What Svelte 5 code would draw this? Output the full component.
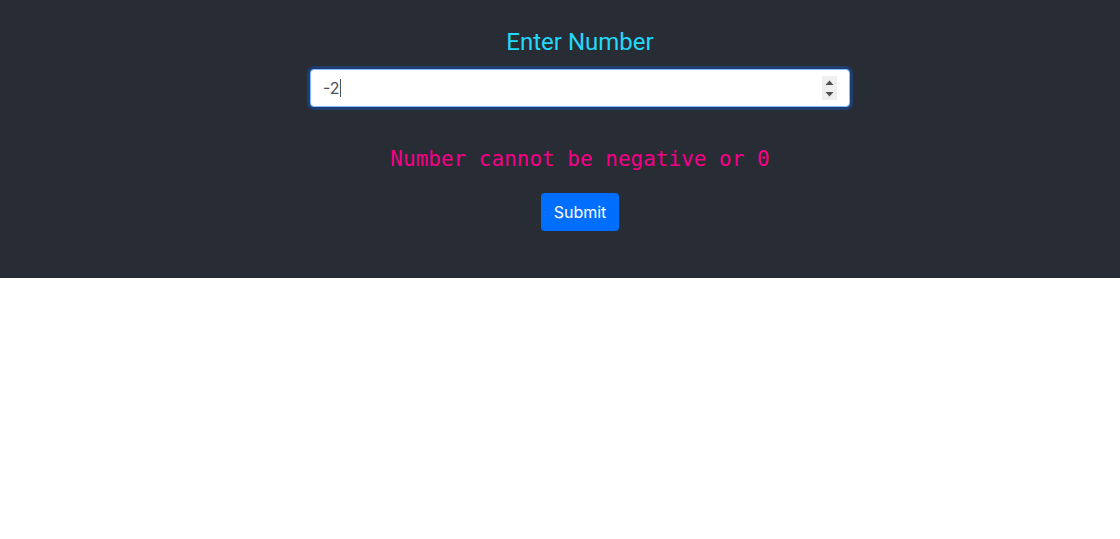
<script>
  let value = $state(-2);
  let error = $derived(value <= 0 ? 'Number cannot be negative or 0' : '');
  let field;

  $effect(() => {
    field.focus();
  });
</script>

<main>
  <form onsubmit={(e) => e.preventDefault()}>
    <label for="number">Enter Number</label>
    <div class="control">
      <input id="number" type="number" bind:value bind:this={field} />
      <span class="caret"></span>
      <div class="stepper">
        <button type="button" aria-label="Increase" tabindex="-1" onclick={() => (value += 1)}>
          <svg viewBox="0 0 15 12" width="15" height="12"><path d="M3.5 9 7.5 4.5 11.5 9Z" /></svg>
        </button>
        <button type="button" aria-label="Decrease" tabindex="-1" onclick={() => (value -= 1)}>
          <svg viewBox="0 0 15 12" width="15" height="12"><path d="M3.5 4 7.5 8.5 11.5 4Z" /></svg>
        </button>
      </div>
    </div>
    <p class="error" role="alert">{error}</p>
    <button class="submit" type="submit">Submit</button>
  </form>
</main>

<style>
  :global(body) {
    background: #fff;
  }

  main {
    display: flex;
    justify-content: center;
    padding: 24px 0 47px 40px;
    background: #282c34;
    font-family: Inter, "Liberation Sans", sans-serif;
  }

  form {
    display: flex;
    flex-direction: column;
    align-items: center;
    width: 100%;
    max-width: 540px;
  }

  label {
    margin-bottom: 9px;
    font-family: Roboto, "Liberation Sans", sans-serif;
    font-size: 24px;
    line-height: 36px;
    color: #21d9fa;
  }

  .control {
    position: relative;
    width: 100%;
  }

  input {
    box-sizing: border-box;
    display: block;
    width: 100%;
    height: 38px;
    padding: 6px 12px;
    border: 1px solid #80bdff;
    border-radius: 4px;
    outline: none;
    background: #fff;
    box-shadow: 0 0 0 3px rgba(20, 83, 180, 0.45);
    caret-color: transparent;
    appearance: textfield;
    font: 16px/24px Inter, "Liberation Sans", sans-serif;
    color: #495057;
  }

  input::-webkit-inner-spin-button {
    appearance: none;
    margin: 0;
  }

  .caret {
    position: absolute;
    top: 10px;
    left: 30px;
    width: 1px;
    height: 18px;
    background: #495057;
  }

  .stepper {
    position: absolute;
    top: 7px;
    right: 13px;
    display: flex;
    flex-direction: column;
    background: #efefef;
  }

  .stepper button {
    display: block;
    padding: 0;
    border: 0;
    background: none;
  }

  .stepper svg {
    display: block;
    fill: #505050;
  }

  .error {
    margin: 35px 0 17px;
    font-family: "DejaVu Sans Mono", monospace;
    font-size: 21px;
    line-height: 34px;
    color: #f50087;
  }

  .submit {
    height: 38px;
    padding: 6px 13px;
    border: 0;
    border-radius: 4px;
    background: #006fff;
    font: 16px/24px Inter, "Liberation Sans", sans-serif;
    color: #fff;
  }
</style>
